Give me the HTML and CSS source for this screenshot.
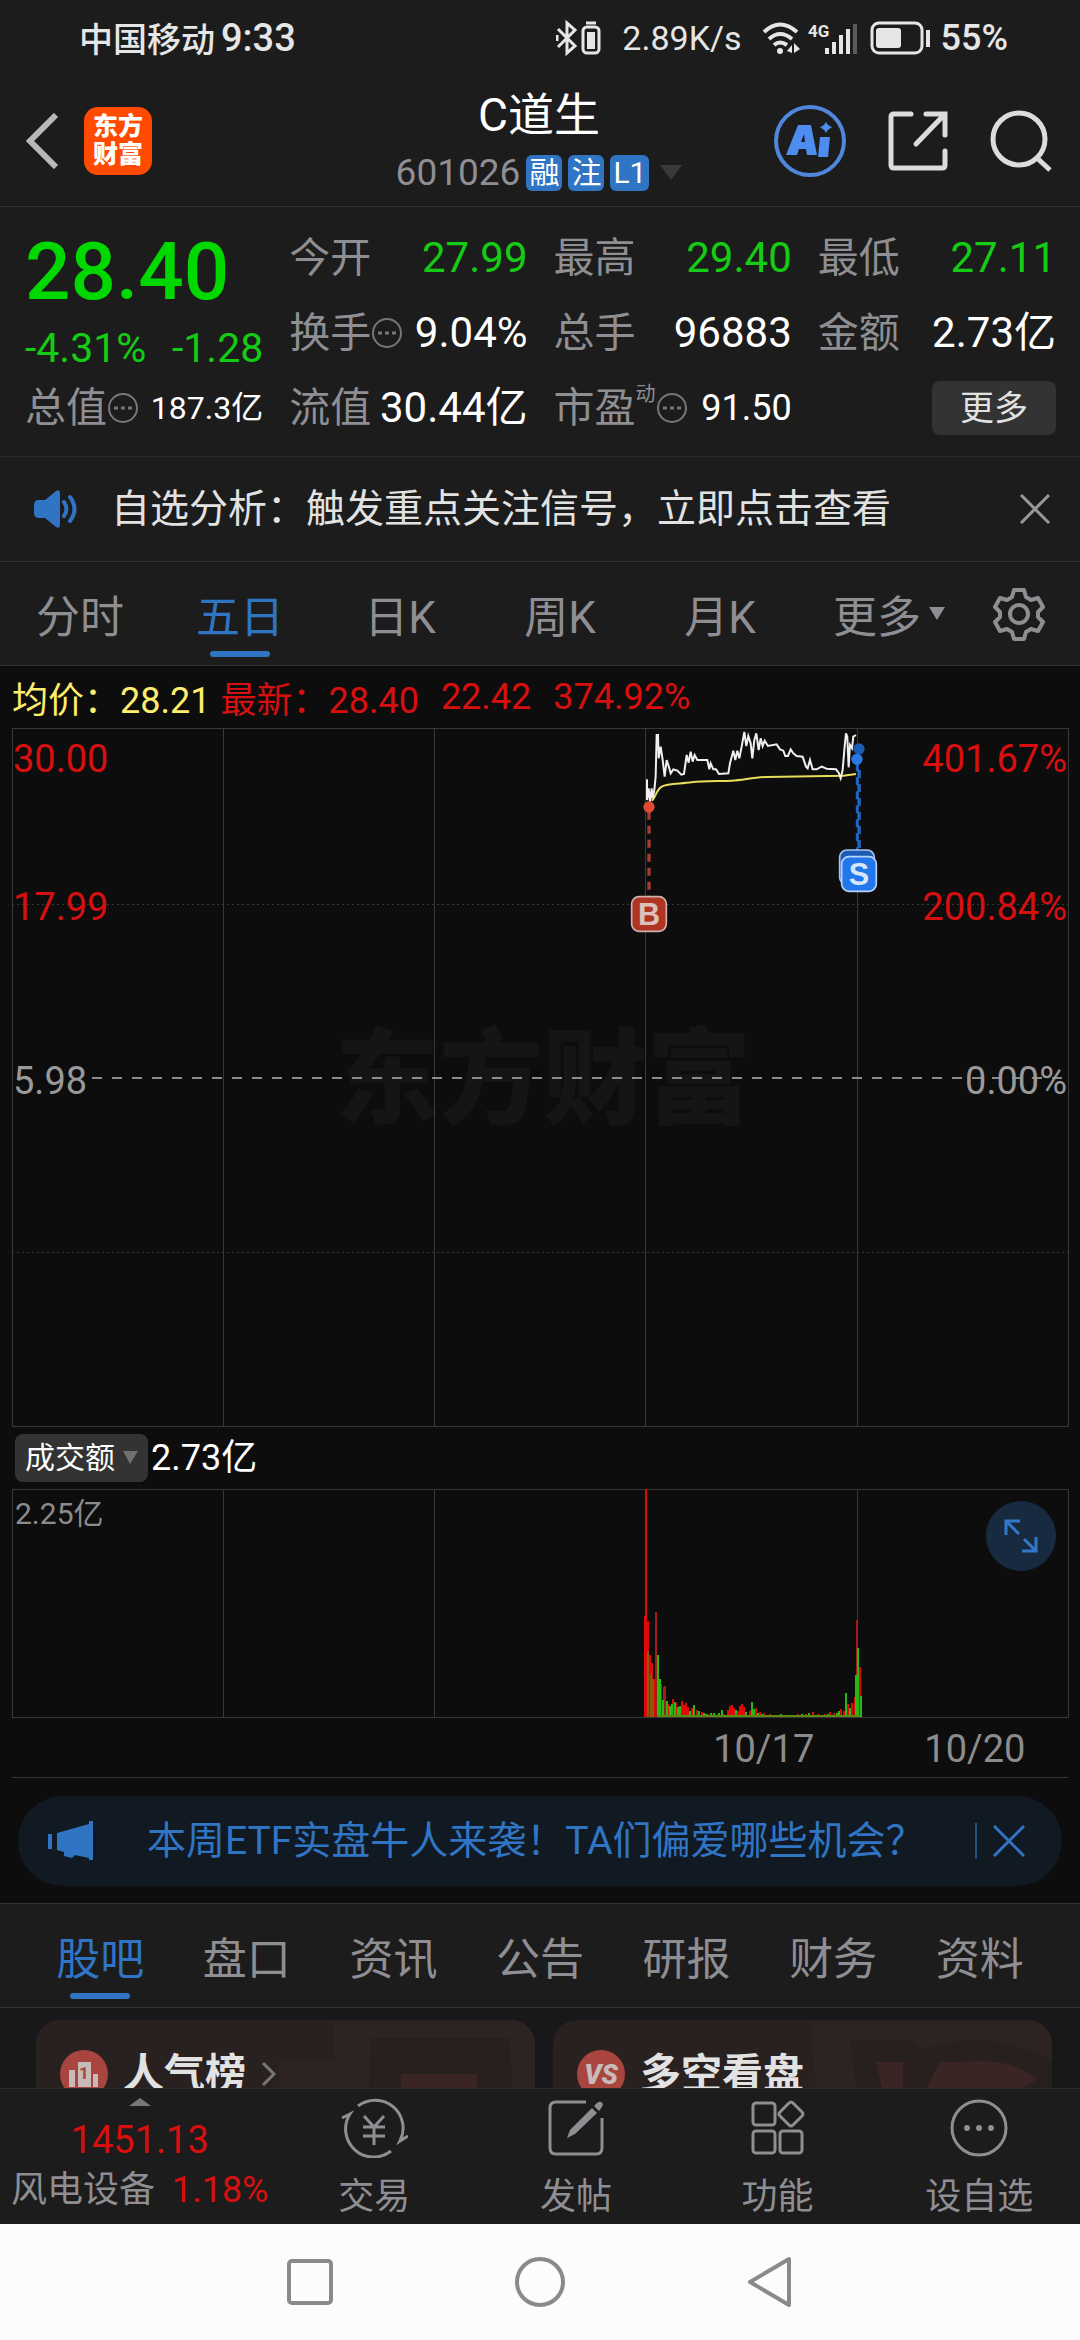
FILE: index.html
```html
<!DOCTYPE html>
<html lang="zh-CN">
<head>
  <meta charset="UTF-8">
  <meta name="viewport" content="width=device-width, initial-scale=1.0">
  <title>C道生 601026</title>
  <link rel="stylesheet" href="styles.css">
</head>
<body>
  <div class="app">
    <div class="status">
      <span class="carrier">中国移动</span>
      <span class="clock">9:33</span>
      <div class="status-right">
        <svg width="46" height="36" viewBox="0 0 46 36" fill="none" stroke="#e6e6e6" stroke-width="3">
          <path d="M2 9L19 26L11 33V3L19 10L2 27M1 15v6"/>
          <rect x="27" y="7" width="16" height="26" rx="4"/>
          <path d="M30 3h10"/>
          <rect x="31" y="12" width="8" height="17" fill="#e6e6e6" stroke="none"/>
        </svg>
        <span class="speed">2.89K/s</span>
        <svg width="98" height="36" viewBox="0 0 98 36" fill="none" stroke="#e6e6e6" stroke-width="4">
          <path d="M2 12Q18-3 35 12M7 19q11-10 23 0M12 25q6-5 13 0"/>
          <circle cx="18" cy="31" r="3" fill="#e6e6e6" stroke="none"/>
          <path d="M25 31l5-6v8zM38 29l-6-6v10z" fill="#e6e6e6" stroke="none"/>
          <text class="net" x="46" y="17">4G</text>
          <path d="M65 34v-6M72 34V22M79 34V15M86 34V9"/>
          <path d="M93 34V4" stroke="#5a5a5a"/>
        </svg>
        <svg width="61" height="34" viewBox="0 0 61 34" fill="none" stroke="#e6e6e6" stroke-width="3">
          <rect x="2" y="2" width="50" height="30" rx="7"/>
          <rect x="6" y="7" width="25" height="20" rx="3" fill="#e6e6e6" stroke="none"/>
          <path d="M58 9v17" stroke-width="4"/>
        </svg>
        <span class="percent">55%</span>
      </div>
    </div>

    <header class="header">
      <div class="header-left">
        <button class="icon-btn" aria-label="返回">
          <svg width="34" height="56" viewBox="0 0 34 56" fill="none" stroke="#b8b8b8" stroke-width="6"><path d="M30 2L4 28L30 54"/></svg>
        </button>
        <a class="logo" href="#"><span>东方</span><span>财富</span></a>
      </div>
      <div class="header-title">
        <h1>C道生</h1>
        <div class="code">
          <span class="code-num">601026</span>
          <span class="tag">融</span>
          <span class="tag">注</span>
          <span class="tag">L1</span>
          <svg class="code-arrow" width="22" height="15" viewBox="0 0 22 15"><path d="M0 0h22L11 15z" fill="#3a3a3a"/></svg>
        </div>
      </div>
      <div class="header-right">
        <button class="icon-btn" aria-label="AI">
          <svg width="72" height="72" viewBox="0 0 72 72">
            <circle cx="36" cy="36" r="34" fill="none" stroke="#5087dc" stroke-width="4"/>
            <path d="M12 50L24 20h13l6 30H33l-1-6h-7l-2 6zM27 37h4l-1-8zM46 32h10l-2 20h-10zM52 17q2 4 6 5q-4 2-6 6q-2-4-6-6q4-1 6-5z" fill="#4f8cf0" fill-rule="evenodd"/>
          </svg>
        </button>
        <button class="icon-btn" aria-label="分享">
          <svg width="60" height="60" viewBox="0 0 60 60" fill="none" stroke="#dcdcdc" stroke-width="5" stroke-linecap="round">
            <path d="M23 3H6q-3 0-3 3v48q0 3 3 3h48q3 0 3-3V40M38 3h19v21M56 4L28 33"/>
          </svg>
        </button>
        <button class="icon-btn" aria-label="搜索">
          <svg width="62" height="62" viewBox="0 0 62 62" fill="none" stroke="#dcdcdc" stroke-width="5">
            <circle cx="29" cy="29" r="26"/><path d="M47 48l13 12"/>
          </svg>
        </button>
      </div>
    </header>

    <section class="quote">
      <div class="quote-price">
        <div class="price">28.40</div>
        <div class="change"><span>-4.31%</span><span>-1.28</span></div>
      </div>
      <div class="cell"><span class="name">今开</span><span class="val down">27.99</span></div>
      <div class="cell"><span class="name">最高</span><span class="val down">29.40</span></div>
      <div class="cell"><span class="name">最低</span><span class="val down">27.11</span></div>
      <div class="cell">
        <span class="name">换手<svg class="dots" viewBox="0 0 32 32"><circle cx="16" cy="16" r="14"/><path d="M7 16h4M14 16h4M21 16h4"/></svg></span>
        <span class="val">9.04%</span>
      </div>
      <div class="cell"><span class="name">总手</span><span class="val">96883</span></div>
      <div class="cell"><span class="name">金额</span><span class="val">2.73亿</span></div>
      <div class="cell">
        <span class="name">总值<svg class="dots" viewBox="0 0 32 32"><circle cx="16" cy="16" r="14"/><path d="M7 16h4M14 16h4M21 16h4"/></svg></span>
        <span class="val val-s">187.3亿</span>
      </div>
      <div class="cell"><span class="name">流值</span><span class="val">30.44亿</span></div>
      <div class="cell">
        <span class="name">市盈<sup>动</sup><svg class="dots" viewBox="0 0 32 32"><circle cx="16" cy="16" r="14"/><path d="M7 16h4M14 16h4M21 16h4"/></svg></span>
        <span class="val val-m">91.50</span>
      </div>
      <div class="cell cell-more"><button class="more">更多</button></div>
    </section>

    <div class="notice">
      <svg width="46" height="38" viewBox="0 0 46 38">
        <path d="M6 10h6L23 1q4-2 4 2v32q0 4-4 2L12 28H6q-5 0-5-5v-8q0-5 5-5z" fill="#3074c4"/>
        <path d="M31 12q5 7 0 14M37 7q9 12 0 24" fill="none" stroke="#3074c4" stroke-width="4" stroke-linecap="round"/>
      </svg>
      <p>自选分析：触发重点关注信号，立即点击查看</p>
      <button class="icon-btn" aria-label="关闭">
        <svg width="30" height="30" viewBox="0 0 30 30" stroke="#999" stroke-width="3"><path d="M1 1L29 29M29 1L1 29"/></svg>
      </button>
    </div>

    <nav class="period">
      <button>分时</button>
      <button class="active">五日</button>
      <button>日K</button>
      <button>周K</button>
      <button>月K</button>
      <button>更多<svg class="tri" width="16" height="13" viewBox="0 0 16 13"><path d="M0 0h16L8 13z" fill="#8e8e93"/></svg></button>
      <button aria-label="设置">
        <svg width="52" height="54" viewBox="0 0 52 54" fill="none" stroke="#8e8e93" stroke-width="4" stroke-linejoin="round">
          <path d="M21 3h10l2 7l5 3l7-2l5 9l-5 5v5l5 5l-5 9l-7-2l-5 3l-2 7H21l-2-7l-5-3l-7 2l-5-9l5-5v-5l-5-5l5-9l7 2l5-3z"/>
          <circle cx="26" cy="27" r="9"/>
        </svg>
      </button>
    </nav>

    <main class="content">
      <div class="legend">
        <span class="avg">均价：28.21</span>
        <span class="up">最新：28.40</span>
        <span class="up gap">22.42</span>
        <span class="up gap">374.92%</span>
      </div>

      <svg class="chart" viewBox="0 0 1056 698">
        <text class="watermark" x="531" y="388" text-anchor="middle">东方财富</text>
        <g class="grid">
          <path d="M211 0V698M422 0V698M633 0V698M845 0V698"/>
          <path d="M0 176H1056M0 524H1056" stroke-dasharray="2 3"/>
          <rect x="0" y="0" width="1056" height="698"/>
        </g>
        <path d="M80 350H1056" stroke="#8c8c8c" stroke-width="2" stroke-dasharray="10 10"/>
        <g class="axis up-fill">
          <text x="1" y="44">30.00</text>
          <text x="1" y="192">17.99</text>
          <text x="1055" y="44" text-anchor="end">401.67%</text>
          <text x="1055" y="192" text-anchor="end">200.84%</text>
        </g>
        <g class="axis flat-fill">
          <text x="1" y="366">5.98</text>
          <text x="1055" y="366" text-anchor="end">0.00%</text>
        </g>
        <!-- 价格线、均价线和买卖点，1/3 缩放 -->
        <g transform="translate(608 -18) scale(.3333)" fill="none">
          <path d="M95 272C105 268 108 240 125 230S180 222 215 217S300 214 335 212S400 202 440 201L670 197L708 192" stroke="#e8de5a" stroke-width="6"/>
          <path d="M81 208V270L86 235L90 275L95 235L98 265L103 240L107 200L110 75L114 75L116 145L122 110L128 150L134 200L140 150L148 175L152 190L160 178L172 182L184 194L192 192L200 135L206 158L212 125L218 155L224 135L232 150H262L268 178L272 160L280 178H288L297 192L325 190L330 160L340 122L346 150L352 122L358 145L365 110L373 66L379 108L385 78L392 100L397 145L403 90L409 70L416 120L422 85L428 108L434 92L444 108L470 103L480 118L490 122L496 138H504L512 118L520 130L530 138L548 140L558 170L563 175L570 150L578 178H590L605 170L620 176L648 178L656 188L662 205L668 180L674 110L678 70L682 80L686 172L690 105L696 115L700 80L708 75" stroke="#f0f0f0" stroke-width="6"/>
          <path d="M87 305V558" stroke="#a63c30" stroke-width="10" stroke-dasharray="24 18"/>
          <circle cx="87" cy="291" r="17" fill="#e04a30"/>
          <path d="M712 160V430M718 180V440" stroke="#1f66c4" stroke-width="9" stroke-dasharray="24 18"/>
          <circle cx="717" cy="117" r="17" fill="#1d5cb4"/>
          <circle cx="711" cy="148" r="17" fill="#2a78e6"/>
          <rect x="35" y="560" width="104" height="104" rx="22" fill="#b03424" stroke="#d0b0ac" stroke-width="5"/>
          <rect x="659" y="420" width="104" height="104" rx="22" fill="#1d5cb4" stroke="#a8c4ea" stroke-width="5"/>
          <rect x="665" y="440" width="104" height="104" rx="22" fill="#2277ea" stroke="#b8d2f4" stroke-width="5"/>
          <text class="mark" x="87" y="645" fill="#dcc0bc">B</text>
          <text class="mark" x="717" y="525" fill="#d8e6fa">S</text>
        </g>
      </svg>

      <div class="volume-head">
        <label class="picker">
          <select aria-label="副图指标"><option>成交额</option><option>成交量</option></select>
          <svg width="15" height="13" viewBox="0 0 15 13"><path d="M0 0h15L7 13z" fill="#707070"/></svg>
        </label>
        <span>2.73亿</span>
      </div>

      <div class="volume">
        <svg class="chart" viewBox="0 0 1056 228">
          <g class="grid">
            <path d="M211 0V228M422 0V228M633 0V228M845 0V228"/>
            <rect x="0" y="0" width="1056" height="228"/>
          </g>
          <text class="vol-max" x="3" y="35">2.25亿</text>
          <g stroke-width="2">
            <path d="M634 228V0M633 228V127M636 228V132M638 228V166M640 228V174M642 228V190M645 228V187M644 228V123M649 228V195M652 228V198M653 228V197M656 228V215M661 228V210M664 228V214M670 228V212M672 228V216M674 228V214M676 228V218M680 228V219M685 228V221M690 228V223M696 228V225M704 228V226M712 228V225M716 228V221M718 228V217M720 228V216M722 228V219M726 228V222M728 228V217M730 228V215M732 228V218M738 228V222M744 228V219M748 228V223M752 228V224M758 228V225M766 228V226M776 228V226M786 228V225M794 228V225M801 228V223M806 228V225M813 228V225M818 228V223M822 228V224M829 228V220M832 228V222M836 228V215M840 228V214M843 228V208M848 228V178" stroke="#e00808"/>
            <path d="M644 228V123M653 228V197M845 228V131" stroke="#a31c1c"/>
            <path d="M636 228V162M639 228V185M641 228V190M646 228V198" stroke="#8a5a08"/>
            <path d="M646 228V166M648 228V190M651 228V211M655 228V212M658 228V217M660 228V215M663 228V213M666 228V218M668 228V217M678 228V222M682 228V216M687 228V222M692 228V224M694 228V225M699 228V224M702 228V224M707 228V224M710 228V221M714 228V226M724 228V221M734 228V223M740 228V213M742 228V220M746 228V224M750 228V225M755 228V226M761 228V226M769 228V225M772 228V226M780 228V226M790 228V225M797 228V224M810 228V226M816 228V225M825 228V224M827 228V222M834 228V204M838 228V219M844 228V186M846 228V159M849 228V207" stroke="#28b814"/>
            <path d="M645 227H848" stroke="#5a8a10"/>
          </g>
        </svg>
        <button class="expand" aria-label="全屏">
          <svg width="34" height="34" viewBox="0 0 34 34" fill="none" stroke="#3278c8" stroke-width="3"><path d="M2 16V2h14M2 2l13 13M32 18v14H18M32 32L20 20"/></svg>
        </button>
      </div>
      <div class="dates"><span></span><span></span><span></span><span>10/17</span><span>10/20</span></div>

      <div class="banner">
        <svg width="46" height="40" viewBox="0 0 46 40" fill="#3074c4"><path d="M0 13h4v15H0zM9 12L41 3V0h4v39h-4v-2l-14-3l-3 3l-8-2v-4l-7-2z"/></svg>
        <a href="#">本周ETF实盘牛人来袭！TA们偏爱哪些机会？</a>
        <button class="icon-btn banner-close" aria-label="关闭">
          <svg width="32" height="32" viewBox="0 0 32 32" stroke="#3074c4" stroke-width="3"><path d="M1 1L31 31M31 1L1 31"/></svg>
        </button>
      </div>

      <nav class="section-tabs">
        <button class="active">股吧</button>
        <button>盘口</button>
        <button>资讯</button>
        <button>公告</button>
        <button>研报</button>
        <button>财务</button>
        <button>资料</button>
      </nav>

      <div class="cards">
        <a class="card" href="#">
          <svg class="card-bg" viewBox="0 0 256 68"><path d="M0 40h55V0h201v68H0z" fill="#2d2322"/><path d="M92 18h138l4 50H90z" fill="#281f1f"/><path d="M122 54h76v14h-76z" fill="#3a2524"/></svg>
          <svg width="48" height="48" viewBox="0 0 48 48">
            <circle cx="24" cy="24" r="24" fill="#a8453f"/>
            <path d="M9 20h6v17H9zM18 12h13v25H18zM33 24h5v13h-5z" fill="#c8bab8"/>
            <text class="rank" x="24" y="29">1</text>
          </svg>
          <h2>人气榜</h2>
          <svg width="16" height="26" viewBox="0 0 16 26" fill="none" stroke="#777" stroke-width="3"><path d="M2 2l11 11L2 24"/></svg>
        </a>
        <a class="card" href="#">
          <svg class="card-bg" viewBox="0 0 256 68"><path d="M14 0h242v68H20z" fill="#2d2322"/><path d="M54 20h62l12 10q60-24 128 10v28H60z" fill="#281f1f"/><path d="M80 42h27v26H86zM143 42h22q50-6 76 18l-14 8h-96z" fill="#3a2524"/></svg>
          <svg width="48" height="48" viewBox="0 0 48 48">
            <circle cx="24" cy="24" r="24" fill="#a8453f"/>
            <text class="vs" x="24" y="34">VS</text>
          </svg>
          <h2>多空看盘</h2>
        </a>
      </div>
    </main>

    <footer class="bottom">
      <a class="index" href="#">
        <svg width="22" height="8" viewBox="0 0 22 8"><path d="M0 8L11 0L22 8z" fill="#77777c"/></svg>
        <span class="index-val">1451.13</span>
        <span class="index-name">风电设备 <b>1.18%</b></span>
      </a>
      <button>
        <svg width="68" height="60" viewBox="0 0 68 60" fill="none" stroke="#8e8e93" stroke-width="3">
          <path d="M18 8A28 28 0 0 1 60 43l8-5M51 53A28 28 0 0 1 10 16l-8 4M24 18l10 11l10-11M23 29h22M23 38h22M34 29v18"/>
        </svg>
        <span>交易</span>
      </button>
      <button>
        <svg width="56" height="60" viewBox="0 0 56 60" fill="none" stroke="#8e8e93" stroke-width="3">
          <path d="M38 4H8q-6 0-6 6v40q0 6 6 6h40q6 0 6-6V20"/>
          <path d="M19 40l3-8L44 10l5 5L27 36zM46 8l3-3q4-3 6 1l-1 3l-3 4z" fill="#8e8e93" stroke="none"/>
        </svg>
        <span>发帖</span>
      </button>
      <button>
        <svg width="54" height="60" viewBox="0 0 54 60" fill="none" stroke="#8e8e93" stroke-width="3">
          <rect x="2" y="5" width="22" height="22" rx="3"/><rect x="2" y="33" width="22" height="22" rx="3"/><rect x="29" y="33" width="22" height="22" rx="3"/>
          <path d="M38 5q2-2 4 0l9 9q2 2 0 4l-9 9q-2 2-4 0l-9-9q-2-2 0-4z"/>
        </svg>
        <span>功能</span>
      </button>
      <button>
        <svg width="58" height="60" viewBox="0 0 58 60" fill="none" stroke="#8e8e93" stroke-width="3">
          <circle cx="29" cy="30" r="27"/>
          <g fill="#8e8e93" stroke="none"><circle cx="17" cy="30" r="3"/><circle cx="29" cy="30" r="3"/><circle cx="41" cy="30" r="3"/></g>
        </svg>
        <span>设自选</span>
      </button>
    </footer>

    <div class="sysnav">
      <button class="icon-btn" aria-label="最近任务"><svg width="46" height="52" viewBox="0 0 46 52" fill="none" stroke="#8a8a8a" stroke-width="4"><rect x="2" y="5" width="42" height="42" rx="3"/></svg></button>
      <button class="icon-btn" aria-label="主页"><svg width="52" height="52" viewBox="0 0 52 52" fill="none" stroke="#8a8a8a" stroke-width="4"><circle cx="26" cy="26" r="23"/></svg></button>
      <button class="icon-btn" aria-label="后退"><svg width="46" height="52" viewBox="0 0 46 52" fill="none" stroke="#8a8a8a" stroke-width="4" stroke-linejoin="round"><path d="M42 3v46L3 26z"/></svg></button>
    </div>
  </div>
</body>
</html>
```

FILE: styles.css
```css
* {
  box-sizing: border-box;
}
body, h1, h2, p {
  margin: 0;
}
body {
  background: #1c1c1c;
  color: #fff;
  font-family: Roboto, "Noto Sans CJK SC", sans-serif;
}
a {
  color: inherit;
  text-decoration: none;
}
button, select {
  margin: 0;
  padding: 0;
  border: none;
  background: none;
  color: inherit;
  font: inherit;
}
svg {
  display: block;
  flex: none;
}
.app {
  display: flex;
  flex-direction: column;
  height: 100vh;
}
.icon-btn {
  display: flex;
  align-items: center;
  justify-content: center;
}

/* 状态栏 */
.status {
  display: flex;
  align-items: center;
  gap: 6px;
  height: 75px;
  padding: 0 72px 0 79px;
  color: #e6e6e6;
  font-size: 36px;
}
.carrier {
  font-size: 34px;
  font-weight: 500;
}
.clock {
  font-size: 38px;
  font-weight: 500;
}
.status-right {
  display: flex;
  align-items: center;
  gap: 10px;
  margin-left: auto;
}
.speed {
  margin: 0 10px;
  font-size: 34px;
}
.percent {
  font-weight: 500;
}
.net {
  font-size: 17px;
  font-weight: bold;
  fill: #e6e6e6;
  stroke: none;
}

/* 标题 */
.header {
  display: grid;
  grid-template-columns: 1fr auto 1fr;
  align-items: center;
  height: 132px;
  padding: 0 28px 0 26px;
  border-bottom: 1px solid #333;
}
.header-left, .header-right {
  display: flex;
  align-items: center;
  gap: 24px;
}
.header-right {
  justify-content: flex-end;
  gap: 42px;
}
.logo {
  display: flex;
  flex-direction: column;
  align-items: center;
  justify-content: center;
  width: 68px;
  height: 68px;
  border-radius: 14px;
  background: #ff4a00;
  font-size: 25px;
  line-height: 28px;
  font-weight: 900;
}
.header-title {
  text-align: center;
}
.header-title h1 {
  font-size: 46px;
  font-weight: 400;
  line-height: 64px;
}
.code {
  display: flex;
  align-items: center;
  justify-content: center;
  gap: 6px;
  height: 52px;
}
.code-num {
  color: #8e8e93;
  font-size: 37px;
}
.tag {
  padding: 0 3px;
  border-radius: 6px;
  background: #3074c4;
  font-size: 30px;
  line-height: 36px;
}
.code-arrow {
  margin-left: 5px;
}

/* 行情数据 */
.quote {
  display: grid;
  grid-template-columns: repeat(4, 1fr);
  grid-auto-rows: 75px;
  column-gap: 26px;
  padding: 13px 24px 11px 25px;
  border-bottom: 1px solid #2b2b2b;
}
.quote-price {
  grid-row: span 2;
}
.price {
  color: #00d800;
  font-size: 80px;
  font-weight: 500;
  line-height: 104px;
}
.change {
  display: flex;
  justify-content: space-between;
  color: #14cc14;
  font-size: 41px;
  line-height: 48px;
}
.cell {
  display: flex;
  align-items: center;
  justify-content: space-between;
  line-height: 48px;
  white-space: nowrap;
}
.name {
  display: flex;
  align-items: center;
  color: #8e8e93;
  font-size: 41px;
}
.name sup {
  align-self: flex-start;
  font-size: 20px;
  line-height: 20px;
}
.val {
  font-size: 42px;
}
.val-m {
  font-size: 36px;
}
.val-s {
  font-size: 32px;
}
.down {
  color: #14cc14;
}
.dots {
  width: 32px;
  height: 32px;
  fill: none;
  stroke: #77777a;
  stroke-width: 2;
}
.dots path {
  stroke-width: 3;
}
.cell-more {
  justify-content: flex-end;
}
.more {
  width: 124px;
  height: 54px;
  border-radius: 8px;
  background: #333;
  color: #e2e2e2;
  font-size: 34px;
  line-height: 54px;
}

/* 提示条 */
.notice {
  display: flex;
  align-items: center;
  height: 105px;
  padding: 0 30px 0 33px;
  border-bottom: 1px solid #333;
}
.notice p {
  flex: 1;
  margin-left: 32px;
  color: #e2e2e2;
  font-size: 39px;
  line-height: 48px;
}

/* 周期切换 */
.period, .section-tabs {
  display: grid;
  height: 104px;
  border-bottom: 1px solid #333;
  background: #1c1c1c;
  color: #8e8e93;
  font-size: 44px;
}
.period {
  grid-template-columns: repeat(5, 160fr) 178fr 82fr;
  padding-right: 20px;
}
.period button, .section-tabs button {
  position: relative;
  display: flex;
  align-items: center;
  justify-content: center;
}
.tri {
  margin-left: 8px;
}
.period .active, .section-tabs .active {
  color: #3074c4;
}
.active::after {
  content: "";
  position: absolute;
  bottom: 8px;
  width: 60px;
  height: 6px;
  border-radius: 3px;
  background: #3074c4;
}

/* 图表 */
.content {
  flex: 1;
  min-height: 0;
  overflow: hidden;
  background: #0d0d0d;
}
.legend {
  display: flex;
  align-items: center;
  gap: 10px;
  height: 62px;
  padding: 0 12px;
  font-size: 36px;
}
.legend .gap {
  margin-left: 12px;
}
.avg {
  color: #ffee6e;
}
.up {
  color: #d80f0f;
}
.chart {
  width: calc(100% - 24px);
  margin: 0 12px;
  overflow: visible;
}
.grid {
  fill: none;
  stroke: #383838;
  stroke-width: 1;
  shape-rendering: crispEdges;
}
.watermark {
  font-size: 104px;
  font-weight: 900;
  fill: #151515;
}
.axis {
  font-size: 38px;
}
.up-fill {
  fill: #d80f0f;
}
.flat-fill {
  fill: #999;
}
.mark {
  font-family: "Liberation Sans", sans-serif;
  font-size: 92px;
  font-weight: bold;
  text-anchor: middle;
}
.volume-head {
  display: flex;
  align-items: center;
  gap: 3px;
  height: 63px;
  padding: 0 15px;
  font-size: 36px;
  line-height: 48px;
}
.picker {
  display: flex;
  align-items: center;
  position: relative;
}
.picker select {
  width: 133px;
  height: 48px;
  padding-left: 10px;
  border-radius: 8px;
  background: #333;
  font-size: 30px;
  appearance: none;
}
.picker svg {
  position: absolute;
  right: 10px;
}
.volume {
  position: relative;
}
.vol-max {
  font-size: 30px;
  fill: #8c8c8c;
}
.expand {
  position: absolute;
  top: 12px;
  right: 24px;
  display: flex;
  align-items: center;
  justify-content: center;
  width: 70px;
  height: 70px;
  border-radius: 50%;
  background: #182a40;
}
.dates {
  display: grid;
  grid-template-columns: repeat(5, 1fr);
  height: 61px;
  margin: 0 12px;
  border-bottom: 1px solid #333;
  color: #8c8c8c;
  font-size: 38px;
  line-height: 64px;
  text-align: center;
}
.dates span {
  padding-left: 25px;
}

/* 活动条 */
.banner {
  display: flex;
  align-items: center;
  height: 90px;
  margin: 18px 18px 17px;
  padding: 0 37px 0 30px;
  border-radius: 45px;
  background: #111a22;
  color: #3074c4;
  font-size: 39px;
  line-height: 48px;
}
.banner a {
  flex: 1;
  margin-left: 53px;
}
.banner-close {
  height: 36px;
  padding-left: 16px;
  border-left: 2px solid #24507f;
}
.section-tabs {
  grid-template-columns: repeat(7, 1fr);
  height: 105px;
  padding: 0 27px;
  border-top: 1px solid #333;
}

/* 卡片 */
.cards {
  display: grid;
  grid-template-columns: 1fr 1fr;
  gap: 18px;
  padding: 12px 28px 12px 36px;
  background: #18181a;
}
.card {
  position: relative;
  display: flex;
  gap: 15px;
  height: 200px;
  padding: 30px 24px;
  border-radius: 24px;
  background: #292020;
  overflow: hidden;
}
.card-bg {
  position: absolute;
  top: 0;
  right: 0;
  height: 68px;
}
.card > * {
  z-index: 1;
}
.card .card-bg {
  z-index: 0;
}
.card h2 {
  color: #e2e2e2;
  font-size: 41px;
  line-height: 48px;
}
.card h2 + svg {
  margin-top: 11px;
}
.rank {
  font-size: 17px;
  font-weight: bold;
  text-anchor: middle;
  fill: #a8453f;
}
.vs {
  font-size: 27px;
  font-weight: 900;
  font-style: italic;
  text-anchor: middle;
  fill: #c8bab8;
}

/* 底部栏 */
.bottom {
  display: grid;
  grid-template-columns: 274fr repeat(4, 202fr);
  height: 136px;
  border-top: 1px solid #2c2c2c;
  color: #8e8e93;
  font-size: 36px;
}
.bottom > * {
  display: flex;
  flex-direction: column;
  align-items: center;
  padding-top: 9px;
}
.bottom button span {
  margin-top: 14px;
  line-height: 50px;
}
.index {
  padding-left: 6px;
  white-space: nowrap;
}
.index-val {
  margin-top: 9px;
  color: #d80f0f;
  font-size: 38px;
  line-height: 50px;
}
.index-name {
  line-height: 50px;
}
.index-name b {
  margin-left: 8px;
  color: #d80f0f;
  font-weight: 400;
}

/* 系统导航 */
.sysnav {
  display: grid;
  grid-template-columns: repeat(3, 230fr);
  height: 116px;
  padding: 0 18%;
  background: #fcfcfc;
}
```
